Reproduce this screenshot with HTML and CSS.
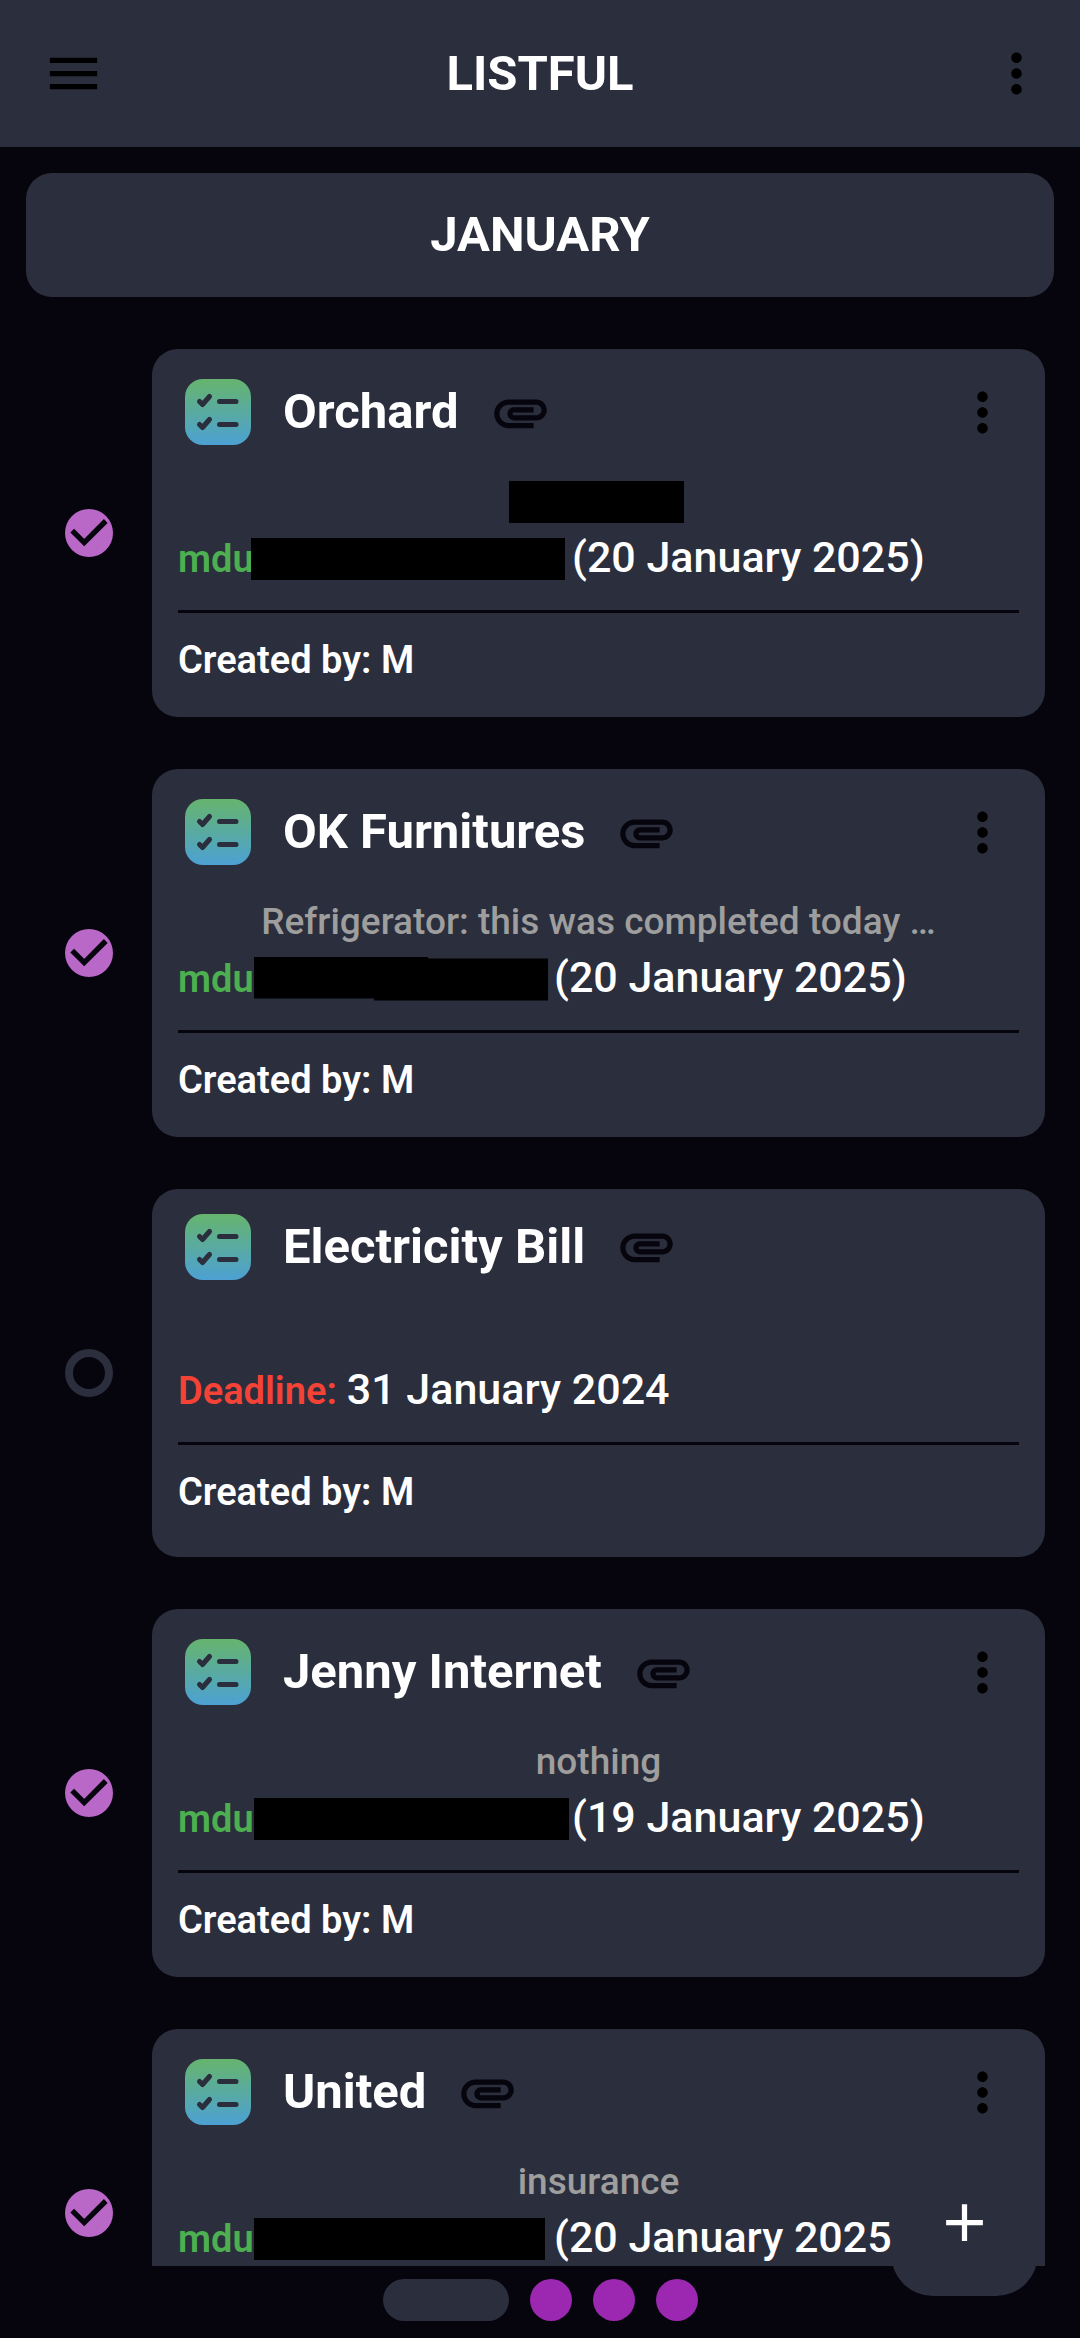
FILE: index.html
```html
<!DOCTYPE html>
<html lang="en">
<head>
<meta charset="utf-8">
<meta name="viewport" content="width=device-width, initial-scale=1">
<title>Listful</title>
<link rel="stylesheet" href="styles.css">
</head>
<body>
<svg class="sprite" aria-hidden="true">
  <defs>
    <linearGradient id="tile-fill" x1="0" y1="0" x2="0" y2="1">
      <stop offset="0" stop-color="#66b46e"/>
      <stop offset="1" stop-color="#4ca1d3"/>
    </linearGradient>
    <symbol id="icon-list" viewBox="0 0 66 66">
      <rect width="66" height="66" rx="18" fill="url(#tile-fill)"/>
      <g fill="none" stroke="#2b2e3c" stroke-width="5" stroke-linecap="round" stroke-linejoin="round">
        <path d="M14.5 22.5l3 3 7-8M34.500 22.500h16.500M14.500 45.500l3 3 7-8M34.500 45.500h16.500"/>
      </g>
    </symbol>
    <symbol id="icon-clip" viewBox="0 0 24 24">
      <path d="M2 12.500C2 9.460 4.460 7 7.500 7H18c2.210 0 4 1.790 4 4s-1.790 4-4 4H9.500C8.120 15 7 13.880 7 12.500S8.120 10 9.500 10H17v2H9.410c-.55 0-.55 1 0 1H18c1.100 0 2-.9 2-2s-.9-2-2-2H7.500C5.570 9 4 10.570 4 12.500S5.570 16 7.500 16H17v2H7.500C4.460 18 2 15.540 2 12.500z"/>
    </symbol>
    <symbol id="icon-more" viewBox="0 0 24 24">
      <path d="M12 8c1.100 0 2-.9 2-2s-.9-2-2-2-2 .9-2 2 .9 2 2 2zm0 2c-1.100 0-2 .9-2 2s.9 2 2 2 2-.9 2-2-.9-2-2-2zm0 6c-1.100 0-2 .9-2 2s.9 2 2 2 2-.9 2-2-.9-2-2-2z"/>
    </symbol>
    <symbol id="icon-tick" viewBox="0 0 18 18">
      <path d="M2.700 8.100L7.200 12.600L15.300 4.500" fill="none" stroke="#06040d" stroke-width="2"/>
    </symbol>
  </defs>
</svg>

<header class="topbar">
  <button class="icon-button" type="button" aria-label="Open menu">
    <svg class="icon" viewBox="0 0 24 24"><path d="M3 18h18v-2H3v2zm0-5h18v-2H3v2zm0-7v2h18V6H3z"/></svg>
  </button>
  <h1 class="topbar__title">LISTFUL</h1>
  <button class="icon-button icon-button--end" type="button" aria-label="More options">
    <svg class="icon"><use href="#icon-more"/></svg>
  </button>
</header>

<main class="list">
  <h2 class="month">JANUARY</h2>

  <section class="entry">
    <label class="check">
      <input class="check__box" type="checkbox" aria-label="Orchard done" checked>
      <svg class="check__tick"><use href="#icon-tick"/></svg>
    </label>
    <article class="card">
      <header class="card__head">
        <svg class="card__tile"><use href="#icon-list"/></svg>
        <h3 class="card__title">Orchard</h3>
        <svg class="icon icon--clip"><use href="#icon-clip"/></svg>
        <button class="card__more" type="button" aria-label="Orchard options"><svg class="icon"><use href="#icon-more"/></svg></button>
      </header>
      <p class="card__note"><span class="redaction redaction--note"></span></p>
      <p class="card__date"><span class="who">mdu</span><span class="redaction redaction--snug"></span><span>(20 January 2025)</span></p>
      <p class="card__author">Created by: M</p>
    </article>
  </section>

  <section class="entry">
    <label class="check">
      <input class="check__box" type="checkbox" aria-label="OK Furnitures done" checked>
      <svg class="check__tick"><use href="#icon-tick"/></svg>
    </label>
    <article class="card">
      <header class="card__head">
        <svg class="card__tile"><use href="#icon-list"/></svg>
        <h3 class="card__title">OK Furnitures</h3>
        <svg class="icon icon--clip"><use href="#icon-clip"/></svg>
        <button class="card__more" type="button" aria-label="OK Furnitures options"><svg class="icon"><use href="#icon-more"/></svg></button>
      </header>
      <p class="card__note">Refrigerator: this was completed today …</p>
      <p class="card__date"><span class="who">mdu</span><span class="redaction redaction--stepped"></span><span>(20 January 2025)</span></p>
      <p class="card__author">Created by: M</p>
    </article>
  </section>

  <section class="entry">
    <label class="check">
      <input class="check__box" type="checkbox" aria-label="Electricity Bill done">
    </label>
    <article class="card card--plain">
      <header class="card__head">
        <svg class="card__tile"><use href="#icon-list"/></svg>
        <h3 class="card__title">Electricity Bill</h3>
        <svg class="icon icon--clip"><use href="#icon-clip"/></svg>
      </header>
      <p class="card__note"></p>
      <p class="card__date"><span class="due">Deadline:</span><span>31 January 2024</span></p>
      <p class="card__author">Created by: M</p>
    </article>
  </section>

  <section class="entry">
    <label class="check">
      <input class="check__box" type="checkbox" aria-label="Jenny Internet done" checked>
      <svg class="check__tick"><use href="#icon-tick"/></svg>
    </label>
    <article class="card">
      <header class="card__head">
        <svg class="card__tile"><use href="#icon-list"/></svg>
        <h3 class="card__title">Jenny Internet</h3>
        <svg class="icon icon--clip"><use href="#icon-clip"/></svg>
        <button class="card__more" type="button" aria-label="Jenny Internet options"><svg class="icon"><use href="#icon-more"/></svg></button>
      </header>
      <p class="card__note">nothing</p>
      <p class="card__date"><span class="who">mdu</span><span class="redaction redaction--long"></span><span>(19 January 2025)</span></p>
      <p class="card__author">Created by: M</p>
    </article>
  </section>

  <section class="entry">
    <label class="check">
      <input class="check__box" type="checkbox" aria-label="United done" checked>
      <svg class="check__tick"><use href="#icon-tick"/></svg>
    </label>
    <article class="card">
      <header class="card__head">
        <svg class="card__tile"><use href="#icon-list"/></svg>
        <h3 class="card__title">United</h3>
        <svg class="icon icon--clip"><use href="#icon-clip"/></svg>
        <button class="card__more" type="button" aria-label="United options"><svg class="icon"><use href="#icon-more"/></svg></button>
      </header>
      <p class="card__note">insurance</p>
      <p class="card__date"><span class="who">mdu</span><span class="redaction redaction--short"></span><span>(20 January 2025)</span></p>
    </article>
  </section>
</main>

<nav class="pager" aria-label="Pages">
  <button class="pager__dot pager__dot--current" type="button" aria-label="Page 1" aria-current="page"></button>
  <button class="pager__dot" type="button" aria-label="Page 2"></button>
  <button class="pager__dot" type="button" aria-label="Page 3"></button>
  <button class="pager__dot" type="button" aria-label="Page 4"></button>
</nav>

<button class="fab" type="button" aria-label="Add entry">
  <svg class="icon icon--light" viewBox="0 0 24 24"><path d="M19 13h-6v6h-2v-6H5v-2h6V5h2v6h6v2z"/></svg>
</button>
</body>
</html>
```
FILE: styles.css
```css
:root {
  --ground: #06040d;
  --surface: #2b2e3c;
  --text: #ffffff;
  --muted: #9e9e9e;
  --green: #4caf50;
  --red: #f44336;
  --purple: #9c27b0;
  --purple-light: #ba68c8;
  --size-title: 49px;
  --size-date: 43px;
  --size-body: 38px;
  --size-note: 37px;
}

* {
  box-sizing: border-box;
}

body {
  display: flex;
  flex-direction: column;
  height: 100vh;
  margin: 0;
  background: var(--ground);
  color: var(--text);
  font-family: Roboto, "Noto Sans", sans-serif;
  font-size: var(--size-body);
}

h1, h2, h3, p {
  margin: 0;
}

button {
  display: grid;
  place-items: center;
  padding: 0;
  border: 0;
  background: none;
  cursor: pointer;
}

.sprite {
  position: absolute;
  width: 0;
  height: 0;
}

.icon {
  display: block;
  flex: none;
  width: 63px;
  height: 63px;
  fill: #000000;
}

.icon--clip {
  fill: var(--ground);
}

.icon--light {
  fill: var(--text);
}

/* Top bar */
.topbar {
  display: grid;
  flex: none;
  grid-template-columns: 1fr auto 1fr;
  align-items: center;
  height: 147px;
  padding: 0 32px;
  background: var(--surface);
}

.icon-button {
  justify-self: start;
  margin-left: 10px;
}

.icon-button--end {
  justify-self: end;
}

.topbar__title,
.month {
  font-size: var(--size-title);
  font-weight: 700;
  line-height: 60px;
  text-align: center;
}

/* Scrolling list */
.list {
  flex: 1;
  min-height: 0;
  padding: 26px 0;
  overflow-y: auto;
  scrollbar-width: none;
}

.month {
  margin: 0 26px 52px;
  padding: 32px 26px;
  border-radius: 26px;
  background: var(--surface);
}

.entry {
  display: flex;
  align-items: center;
  gap: 39px;
  margin-bottom: 52px;
  padding: 0 35px 0 65px;
}

.check {
  display: grid;
  flex: none;
  width: 48px;
  height: 48px;
}

.check__box,
.check__tick {
  grid-area: 1 / 1;
  width: 48px;
  height: 48px;
  margin: 0;
}

.check__box {
  appearance: none;
  border: 8px solid var(--surface);
  border-radius: 50%;
}

.check__box:checked {
  border: 0;
  background: var(--purple-light);
}

.check__tick {
  pointer-events: none;
}

/* Card */
.card {
  flex: 1;
  min-width: 0;
  min-height: 368px;
  border-radius: 26px;
  background: var(--surface);
}

.card__head {
  display: flex;
  align-items: center;
  height: 126px;
  padding-left: 33px;
}

.card--plain .card__head {
  height: 115px;
}

.card__tile {
  flex: none;
  width: 66px;
  height: 66px;
}

.card__title {
  margin: 0 30px 0 32px;
  font-size: var(--size-title);
  font-weight: 700;
  line-height: 60px;
  white-space: nowrap;
}

.card__more {
  width: 126px;
  height: 126px;
  margin-left: auto;
}

.card__note {
  display: flex;
  align-items: center;
  justify-content: center;
  height: 54px;
  padding: 0 26px;
  color: var(--muted);
  font-size: var(--size-note);
  font-weight: 500;
  line-height: 54px;
  white-space: nowrap;
}

.card--plain .card__note {
  height: 57px;
}

.card__date {
  display: flex;
  align-items: baseline;
  margin: 0 26px;
  padding-bottom: 22px;
  border-bottom: 3px solid var(--ground);
  font-size: var(--size-date);
  font-weight: 500;
  line-height: 57px;
  white-space: nowrap;
}

.who,
.due {
  font-size: var(--size-body);
  font-weight: 600;
}

.who {
  width: 76px;
  color: var(--green);
}

.due {
  margin-right: 10px;
  color: var(--red);
}

.card__author {
  padding: 24px 26px;
  font-weight: 600;
  line-height: 46px;
}

.redaction {
  align-self: center;
  height: 42px;
  background: #000000;
}

.redaction--note {
  width: 175px;
  margin-right: 5px;
}

.redaction--snug {
  width: 314px;
  margin: 0 7px 0 -3px;
}

.redaction--long {
  width: 315px;
  margin-right: 3px;
}

.redaction--stepped {
  width: 294px;
  height: 44px;
  margin-right: 6px;
  clip-path: polygon(0 0, 174px 0, 174px 2px, 100% 2px, 100% 100%, 120px 100%, 120px 42px, 0 42px);
}

.redaction--short {
  width: 291px;
  margin-right: 9px;
}

/* Page indicator */
.pager {
  display: flex;
  flex: none;
  justify-content: center;
  gap: 21px;
  padding: 13px 0 17px;
}

.pager__dot {
  width: 42px;
  height: 42px;
  border-radius: 21px;
  background: var(--purple);
}

.pager__dot--current {
  width: 126px;
  background: var(--surface);
}

/* Floating action button */
.fab {
  position: absolute;
  right: 42px;
  bottom: 42px;
  width: 147px;
  height: 147px;
  border-radius: 42px;
  background: var(--surface);
}
```
